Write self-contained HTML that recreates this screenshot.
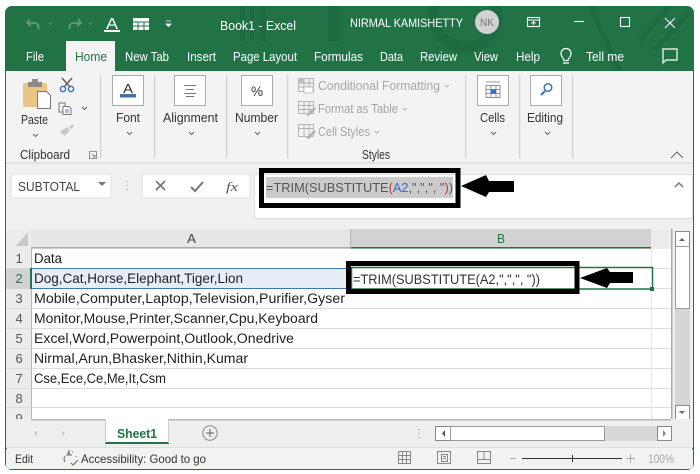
<!DOCTYPE html>
<html><head><meta charset="utf-8"><style>
html,body{margin:0;padding:0;background:#fff;width:700px;height:474px;overflow:hidden}
svg{display:block;filter:blur(.3px)}
text{font-family:"Liberation Sans",sans-serif;font-size:12.5px;fill:#333;white-space:pre}
.w{fill:#fff}.g{fill:#a6a6a6}.c{font-size:13.5px;fill:#222}.n{fill:#555;font-size:13px}
</style></head><body>
<svg width="700" height="474" viewBox="0 0 700 474" xmlns="http://www.w3.org/2000/svg">
<defs><clipPath id="tb"><rect x="5" y="6" width="689" height="65" rx="7"/></clipPath></defs>
<rect x="5" y="6" width="689" height="464" rx="7" fill="#217346"/>
<!-- title pattern -->
<g clip-path="url(#tb)">
<g fill="#1e6b41"><rect x="240" y="6" width="5" height="35"/><rect x="250" y="6" width="4" height="35"/><rect x="260" y="6" width="6" height="35"/><rect x="328" y="6" width="12" height="35"/></g>
<circle cx="465" cy="15" r="32" fill="none" stroke="#1e6b41" stroke-width="11"/>
<path d="M590 6L620 71M640 40L670 6M655 50L690 12" stroke="#1e6b41" stroke-width="5" fill="none"/>
</g>
<!-- QAT -->
<g fill="none" stroke="#5f9c7b" stroke-width="1.800"><path d="M30 19l-3 4 4 3M28 23h7a4 4 0 0 1 3 6"/><path d="M78 19l3 4-4 3M80 23h-7a4 4 0 0 0-3 6"/><path d="M49 23l1.500 1.500L52 23M89 23l1.500 1.500L92 23" stroke-width="1"/></g>
<text x="106" y="29" class="w" style="font-size:16px" textLength="12" lengthAdjust="spacingAndGlyphs">A</text>
<rect x="104" y="30" width="16" height="2" fill="#fff"/>
<rect x="133" y="18" width="16" height="12" fill="#fff"/>
<path d="M133 22h16M133 26h16M138 22v8M144 22v8" stroke="#217346" stroke-width="1"/>
<path d="M166 21h5M166 24h5l-2.500 2.500z" stroke="#fff" fill="#fff" stroke-width=".8"/>
<text x="220" y="30" class="w" textLength="76" lengthAdjust="spacingAndGlyphs">Book1 - Excel</text>
<text x="350" y="27" class="w" textLength="113" lengthAdjust="spacingAndGlyphs" style="font-size:12px">NIRMAL KAMISHETTY</text>
<circle cx="487" cy="22" r="12" fill="#d2d2d2"/>
<text x="480" y="26" style="fill:#777;font-size:11px" textLength="14" lengthAdjust="spacingAndGlyphs">NK</text>
<g fill="none" stroke="#fff" stroke-width="1.100"><rect x="527.500" y="17.500" width="12" height="9"/><path d="M527.500 20h12M533.500 25v-3M531.500 23.500l2-2 2 2"/><path d="M574 21.500h10"/><rect x="620.500" y="17.500" width="9" height="9"/><path d="M665 18l10 10M675 18l-10 10"/></g>
<!-- tabs -->
<rect x="66" y="41" width="49" height="31" fill="#f3f3f3"/>
<text x="26" y="61" class="w" textLength="18" lengthAdjust="spacingAndGlyphs">File</text>
<text x="75" y="61" textLength="32" lengthAdjust="spacingAndGlyphs" style="fill:#217346">Home</text>
<text x="125" y="61" class="w" textLength="44" lengthAdjust="spacingAndGlyphs">New Tab</text>
<text x="187" y="61" class="w" textLength="29" lengthAdjust="spacingAndGlyphs">Insert</text>
<text x="233" y="61" class="w" textLength="64" lengthAdjust="spacingAndGlyphs">Page Layout</text>
<text x="314" y="61" class="w" textLength="49" lengthAdjust="spacingAndGlyphs">Formulas</text>
<text x="380" y="61" class="w" textLength="23" lengthAdjust="spacingAndGlyphs">Data</text>
<text x="420" y="61" class="w" textLength="37" lengthAdjust="spacingAndGlyphs">Review</text>
<text x="474" y="61" class="w" textLength="24" lengthAdjust="spacingAndGlyphs">View</text>
<text x="516" y="61" class="w" textLength="24" lengthAdjust="spacingAndGlyphs">Help</text>
<path d="M563 63h6M564 60.500c0-2-3-3.500-3-7a5 5 0 0 1 10 0c0 3.500-3 5-3 7z" fill="none" stroke="#fff" stroke-width="1.200"/>
<text x="586" y="61" class="w" textLength="38" lengthAdjust="spacingAndGlyphs">Tell me</text>
<path d="M663 49h14v11h-11l-3 3z" fill="none" stroke="#fff" stroke-width="1.200"/>
<!-- ribbon -->
<rect x="6" y="71" width="687" height="92" fill="#f3f3f3"/>
<rect x="6" y="163" width="687" height="66" fill="#f0f0f0"/>
<rect x="6" y="162" width="687" height="2" fill="#e3e3e3"/>
<g fill="#d0d0d0"><rect x="100" y="75" width="1.300" height="83"/><rect x="154" y="75" width="1.300" height="83"/><rect x="226" y="75" width="1.300" height="83"/><rect x="287" y="75" width="1.300" height="83"/><rect x="465" y="75" width="1.300" height="83"/><rect x="519" y="75" width="1.300" height="83"/><rect x="572" y="75" width="1.300" height="83"/></g>
<!-- clipboard -->
<rect x="23" y="83" width="24" height="24" rx="1.500" fill="#eac583"/>
<rect x="28" y="82" width="14" height="5" fill="#8a8a8a"/><rect x="32" y="79" width="6" height="4" fill="#8a8a8a"/>
<path d="M37.500 91.500h9l4 4v13h-13z" fill="#fff" stroke="#777"/>
<g fill="none" stroke="#3f77b5" stroke-width="1.500"><circle cx="63" cy="89" r="2.600"/><circle cx="71" cy="89" r="2.600"/></g>
<path d="M62 78l8 9M72 78l-8 9" stroke="#666" stroke-width="1.600"/>
<g fill="none" stroke="#777"><path d="M59 103h6v9h-6z" fill="#f3f3f3"/><path d="M63 106.500h6l2 2v6h-8z" fill="#fff"/><path d="M65 110h4M65 112h4" stroke="#4a7fb8"/></g>
<path d="M82 107l2.500 2.500L87 107M33 134l2.500 2.500L38 134M127 132l2.500 2.500L132 132M189 132l2.500 2.500L194 132M255 132l2.500 2.500L260 132M491 132l2.500 2.500L496 132M545 132l2.500 2.500L550 132" fill="none" stroke="#666"/>
<path d="M60 132l7-5 3 3-5 6zM69 127l4-3 1 2-3 3z" fill="#c8c8c8"/>
<text x="21" y="124" textLength="27" lengthAdjust="spacingAndGlyphs">Paste</text>
<text x="20" y="159" textLength="50" lengthAdjust="spacingAndGlyphs">Clipboard</text>
<path d="M89.500 151.500h7v7h-7zM92 154l3 3M95 155v2h-2" fill="none" stroke="#777" stroke-width=".8"/>
<!-- boxes -->
<g fill="#fff" stroke="#ababab"><rect x="112.500" y="75.500" width="31" height="30"/><rect x="174.500" y="75.500" width="31" height="30"/><rect x="241.500" y="75.500" width="31" height="30"/><rect x="477.500" y="75.500" width="31" height="30"/><rect x="530.500" y="75.500" width="31" height="30"/></g>
<text x="123" y="93" style="font-size:13px" textLength="10" lengthAdjust="spacingAndGlyphs">A</text><rect x="120" y="94" width="16" height="3.500" fill="#4472b0"/>
<path d="M184 85.500h12M186 89.500h8M184 93.500h12M186 96.500h8" stroke="#777" fill="none" stroke-width=".9"/>
<text x="251" y="96" style="font-size:14px" textLength="12" lengthAdjust="spacingAndGlyphs">%</text>
<g fill="none" stroke="#777" stroke-width=".8"><rect x="486" y="85.500" width="14" height="12"/><path d="M486 89.500h14M486 93.500h14M491 86v11M496 86v11M486 82h14"/></g>
<rect x="490.500" y="89.500" width="5.500" height="4" fill="#2f6fc0"/>
<circle cx="548" cy="87.500" r="3.800" fill="none" stroke="#3f77b5" stroke-width="1.500"/><path d="M545 91l-4 4" stroke="#3f77b5" stroke-width="2.200"/>
<text x="116" y="122" textLength="24" lengthAdjust="spacingAndGlyphs">Font</text>
<text x="163" y="122" textLength="55" lengthAdjust="spacingAndGlyphs">Alignment</text>
<text x="235" y="122" textLength="43" lengthAdjust="spacingAndGlyphs">Number</text>
<text x="480" y="122" textLength="25" lengthAdjust="spacingAndGlyphs">Cells</text>
<text x="527" y="122" textLength="36" lengthAdjust="spacingAndGlyphs">Editing</text>
<!-- styles -->
<g fill="none" stroke="#b0b0b0" stroke-width=".9"><rect x="298.500" y="78.500" width="15" height="13" fill="#f0f0f0"/><path d="M298.500 83h15M298.500 87h15M304 79v13M309 79v13"/><rect x="298.500" y="101.500" width="15" height="12"/><path d="M298.500 105.500h15M298.500 109.500h15M304 102v11M309 102v11"/><rect x="298.500" y="124.500" width="15" height="12"/><path d="M298.500 128.500h15M304 125v11M309 125v11"/></g>
<rect x="298" y="78" width="6" height="5" fill="#bdbdbd"/><rect x="304" y="87" width="9" height="6" fill="#fff" stroke="#aaa" stroke-width=".7"/>
<path d="M306 115l8-8 2 2-7 7zM306 138l8-8 2 2-7 7z" fill="#b5b5b5"/>
<text x="318" y="90" class="g" textLength="122" lengthAdjust="spacingAndGlyphs">Conditional Formatting</text>
<text x="318" y="113" class="g" textLength="80" lengthAdjust="spacingAndGlyphs">Format as Table</text>
<text x="318" y="136" class="g" textLength="52" lengthAdjust="spacingAndGlyphs">Cell Styles</text>
<path d="M445 85l2 2 2-2M403 108l2 2 2-2M375 131l2 2 2-2" fill="none" stroke="#b5b5b5"/>
<text x="362" y="159" textLength="28" lengthAdjust="spacingAndGlyphs">Styles</text>
<path d="M671 158l6-6 6 6" fill="none" stroke="#666" stroke-width="1.100"/>
<!-- formula bar -->
<rect x="11" y="174" width="100" height="24" fill="#fff" stroke="#e2e2e2"/>
<text x="18" y="191" textLength="62" lengthAdjust="spacingAndGlyphs" style="fill:#444">SUBTOTAL</text>
<path d="M98 182h8l-4 4z" fill="#777"/>
<path d="M127 181v1M127 185v1M127 189v1" stroke="#aaa" stroke-width="1.500"/>
<rect x="142" y="174" width="108" height="24" fill="#fff" stroke="#e2e2e2"/>
<path d="M156 181l9 9M165 181l-9 9" stroke="#777" stroke-width="1.700"/>
<path d="M191 187l4 4 8-9" fill="none" stroke="#777" stroke-width="2"/>
<text x="226" y="191" style="font-size:13px;font-style:italic;font-family:'Liberation Serif',serif;fill:#555" textLength="12" lengthAdjust="spacingAndGlyphs">fx</text>
<rect x="254.500" y="174.500" width="438" height="44" fill="#fff" stroke="#dedede"/>
<path d="M675 187l4-4 4 4" fill="none" stroke="#777" stroke-width="1.500"/>
<rect x="266" y="177" width="187" height="21" fill="#cbcbcb"/>
<text x="266" y="192" textLength="187" lengthAdjust="spacingAndGlyphs" style="font-size:13px"><tspan fill="#555">=TRIM(SUBSTITUTE</tspan><tspan fill="#c0392b">(</tspan><tspan fill="#3f68c0">A2</tspan><tspan fill="#555">,",",", "</tspan><tspan fill="#c0392b">)</tspan><tspan fill="#555">)</tspan></text>
<rect x="261.500" y="170.500" width="196.500" height="35" fill="none" stroke="#000" stroke-width="5"/>
<path d="M461 186L486 175L489 181H514V192H489L486 197Z" fill="#000"/>
<!-- sheet -->
<rect x="6" y="229" width="687" height="191" fill="#ececec"/>
<rect x="31" y="229" width="320" height="19" fill="#e6e6e6"/>
<rect x="31" y="249" width="640" height="171" fill="#fff"/>
<path d="M28 246v-14l-12 14z" fill="#c8c8c8"/>
<rect x="351" y="229" width="300" height="18" fill="#d2d2d2"/>
<rect x="351" y="247" width="300" height="1.500" fill="#217346"/>
<rect x="31" y="247" width="320" height="1.500" fill="#ababab"/>
<rect x="350" y="229" width="1" height="20" fill="#b5b5b5"/>
<text x="187" y="243" textLength="9" lengthAdjust="spacingAndGlyphs" style="fill:#444">A</text>
<text x="497" y="243" textLength="8" lengthAdjust="spacingAndGlyphs" style="fill:#217346">B</text>
<g stroke="#dcdcdc" fill="none"><path d="M6 268.500h665M6 288.500h665M6 308.500h665M6 328.500h665M6 348.500h665M6 368.500h665M6 388.500h665M6 407.500h665"/><path d="M651.500 249v171" stroke="#e8e8e8"/></g>
<rect x="31" y="248" width="1" height="172" fill="#b5b5b5"/>
<rect x="6" y="269" width="25" height="20" fill="#d2d2d2"/>
<rect x="32" y="268" width="319" height="21" fill="#e6edf7"/>
<path d="M32 268.500h319M32 288.500h319" stroke="#3f77b5" fill="none"/>
<rect x="30" y="268" width="2" height="21" fill="#217346"/>
<text x="15.500" y="263" class="n">1</text><text x="15.500" y="283" class="n" style="fill:#217346">2</text><text x="15.500" y="303" class="n">3</text><text x="15.500" y="323" class="n">4</text><text x="15.500" y="343" class="n">5</text><text x="15.500" y="363" class="n">6</text><text x="15.500" y="383" class="n">7</text><text x="15.500" y="403" class="n">8</text><text x="15.500" y="423" class="n">9</text>
<text x="34" y="263" class="c" textLength="28" lengthAdjust="spacingAndGlyphs">Data</text>
<text x="34" y="283" class="c" textLength="209" lengthAdjust="spacingAndGlyphs">Dog,Cat,Horse,Elephant,Tiger,Lion</text>
<text x="34" y="303" class="c" textLength="311" lengthAdjust="spacingAndGlyphs">Mobile,Computer,Laptop,Television,Purifier,Gyser</text>
<text x="34" y="323" class="c" textLength="284" lengthAdjust="spacingAndGlyphs">Monitor,Mouse,Printer,Scanner,Cpu,Keyboard</text>
<text x="34" y="343" class="c" textLength="260" lengthAdjust="spacingAndGlyphs">Excel,Word,Powerpoint,Outlook,Onedrive</text>
<text x="34" y="363" class="c" textLength="214" lengthAdjust="spacingAndGlyphs">Nirmal,Arun,Bhasker,Nithin,Kumar</text>
<text x="34" y="383" class="c" textLength="132" lengthAdjust="spacingAndGlyphs">Cse,Ece,Ce,Me,It,Csm</text>
<rect x="351.500" y="267.500" width="301" height="21.500" fill="#fff" stroke="#217346" stroke-width="1.500"/>
<rect x="650" y="287" width="4" height="4" fill="#217346"/>
<text x="353" y="284" class="c" textLength="187" lengthAdjust="spacingAndGlyphs" style="fill:#333">=TRIM(SUBSTITUTE(A2,",",", "))</text>
<rect x="348.500" y="263.500" width="228.500" height="28" fill="none" stroke="#000" stroke-width="5"/>
<path d="M580 278L607 268L610 272H633V283H610L607 288Z" fill="#000"/>
<!-- scrollbar -->
<rect x="671" y="229" width="1.500" height="191" fill="#ababab"/>
<rect x="672.500" y="229" width="20.500" height="191" fill="#f0f0f0"/>
<rect x="675" y="231" width="15" height="189" fill="#d6d6d6"/>
<rect x="675.500" y="231.500" width="14" height="15" fill="#fff" stroke="#888"/>
<path d="M679 241h6l-3-3z" fill="#666"/>
<rect x="675.500" y="246.500" width="14" height="62" fill="#fff" stroke="#999"/>
<rect x="675.500" y="405.500" width="14" height="14" fill="#fff" stroke="#888"/>
<path d="M679 411h6l-3 3z" fill="#666"/>
<!-- tab bar -->
<rect x="6" y="419" width="687" height="28" fill="#eeeeee"/>
<rect x="31" y="419" width="640" height="1.500" fill="#b5b5b5"/>
<rect x="105" y="419" width="64" height="24" fill="#fff"/>
<rect x="105" y="442" width="64" height="2" fill="#217346"/>
<rect x="105" y="419" width="1" height="24" fill="#ccc"/><rect x="168" y="419" width="1" height="24" fill="#ccc"/>
<text x="117" y="438" font-weight="bold" style="fill:#217346;font-size:13px" textLength="40" lengthAdjust="spacingAndGlyphs">Sheet1</text>
<path d="M37 431l-3 2.500 3 2.500zM62 431l3 2.500-3 2.500z" fill="#c8c8c8"/>
<circle cx="210" cy="433" r="7.200" fill="none" stroke="#8a8a8a"/><path d="M206 433h8M210 429v8" stroke="#777" stroke-width="1.200"/>
<path d="M419 429v1M419 433v1M419 437v1" stroke="#aaa" stroke-width="1.500"/>
<rect x="435" y="426" width="237" height="15" fill="#d8d8d8"/>
<rect x="435.500" y="426.500" width="15" height="14" fill="#fff" stroke="#888"/>
<path d="M445 430v7l-3-3.500z" fill="#555"/>
<rect x="450.500" y="426.500" width="154" height="14" fill="#fff" stroke="#999"/>
<rect x="657.500" y="426.500" width="14" height="14" fill="#fff" stroke="#888"/>
<path d="M663 430v7l3-3.500z" fill="#888"/>
<!-- status -->
<rect x="6" y="447" width="687" height="22" fill="#f2f2f2" rx="4"/>
<rect x="6" y="447" width="687" height="1" fill="#dedede"/>
<text x="15" y="463" textLength="18" lengthAdjust="spacingAndGlyphs" style="font-size:12px">Edit</text>
<path d="M65 456a5.500 5.500 0 0 0 0 6M72 452h1M67 453h3M76 456v1M71 463l2 2 5-5" fill="none" stroke="#666"/>
<path d="M69 450v5M66 455h6" stroke="#666" fill="none"/>
<text x="81" y="463" textLength="125" lengthAdjust="spacingAndGlyphs" style="font-size:12px">Accessibility: Good to go</text>
<g fill="none" stroke="#888"><rect x="398.500" y="451.500" width="12" height="12"/><path d="M398.500 455.500h12M398.500 459.500h12M402.500 452v12M406.500 452v12"/><rect x="437.500" y="451.500" width="13" height="12"/><rect x="441.500" y="454.500" width="6" height="7"/><path d="M443 456.500h3M443 458.500h3"/><path d="M477.500 451.500h13v12h-13zM477.500 459.500h13M484 451.500v8"/></g>
<path d="M510 458.500h6" stroke="#aaa"/>
<path d="M522 458.500h100" stroke="#333"/><path d="M572.500 455v7" stroke="#333"/>
<path d="M626 458.500h9M630.500 454v9" stroke="#aaa"/>
<text x="648" y="463" class="g" textLength="26" lengthAdjust="spacingAndGlyphs" style="font-size:12px">100%</text>
</svg>
</body></html>
